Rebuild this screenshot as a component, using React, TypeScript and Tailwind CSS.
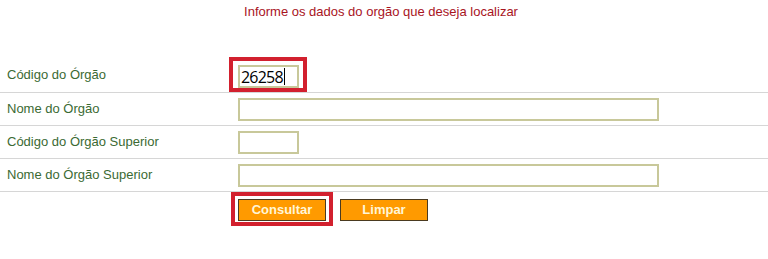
import React from "react";

function Row({ label, children }: { label: string; children: React.ReactNode }) {
  return (
    <div className="flex items-center h-[33px] border-b border-[#d6d6d6]">
      <div className="w-[238px] shrink-0 pl-[7px] text-[13px] text-[#3b6a33]">{label}</div>
      {children}
    </div>
  );
}

export default function App() {
  return (
    <div className="w-[768px] h-[259px] bg-white font-['Liberation_Sans',Arial,sans-serif] overflow-hidden">
      <div className="h-[57px] pt-[2px] pr-[6px] text-center text-[13px] text-[#a8141e]">
        Informe os dados do orgão que deseja localizar
      </div>
      <div className="flex items-center h-[36px] border-b border-[#d6d6d6]">
        <div className="w-[229px] shrink-0 pl-[7px] pt-[1px] text-[13px] text-[#3b6a33]">Código do Órgão</div>
        <div className="border-4 border-[#d2202e] pt-[4px] pb-[0px] pl-[5px] pr-[4px] self-end">
          <div className="w-[61px] h-[23px] border-2 border-[#c8c89a] bg-white flex items-center pl-[1px] font-['Open_Sans',sans-serif] text-[16px] tracking-[-0.8px] text-black leading-none">
            26258<span className="inline-block w-px h-[17px] bg-black ml-[1px]" />
          </div>
        </div>
      </div>
      <Row label="Nome do Órgão">
        <div className="w-[421px] h-[23px] border-2 border-[#c8c89a] bg-white" />
      </Row>
      <Row label="Código do Órgão Superior">
        <div className="w-[61px] h-[23px] border-2 border-[#c8c89a] bg-white" />
      </Row>
      <Row label="Nome do Órgão Superior">
        <div className="w-[421px] h-[23px] border-2 border-[#c8c89a] bg-white" />
      </Row>
      <div className="flex items-start pl-[231px] gap-[7px]">
        <div className="border-4 border-[#d2202e] p-[3px] pb-[1px]">
          <div className="w-[88px] h-[22px] bg-[#ff9a00] border border-[#4a3a20] flex items-center justify-center text-[13px] font-bold text-[#fff6d8]">
            Consultar
          </div>
        </div>
        <div className="mt-[7px] w-[88px] h-[22px] bg-[#ff9a00] border border-[#4a3a20] flex items-center justify-center text-[13px] font-bold text-[#fff6d8]">
          Limpar
        </div>
      </div>
    </div>
  );
}
